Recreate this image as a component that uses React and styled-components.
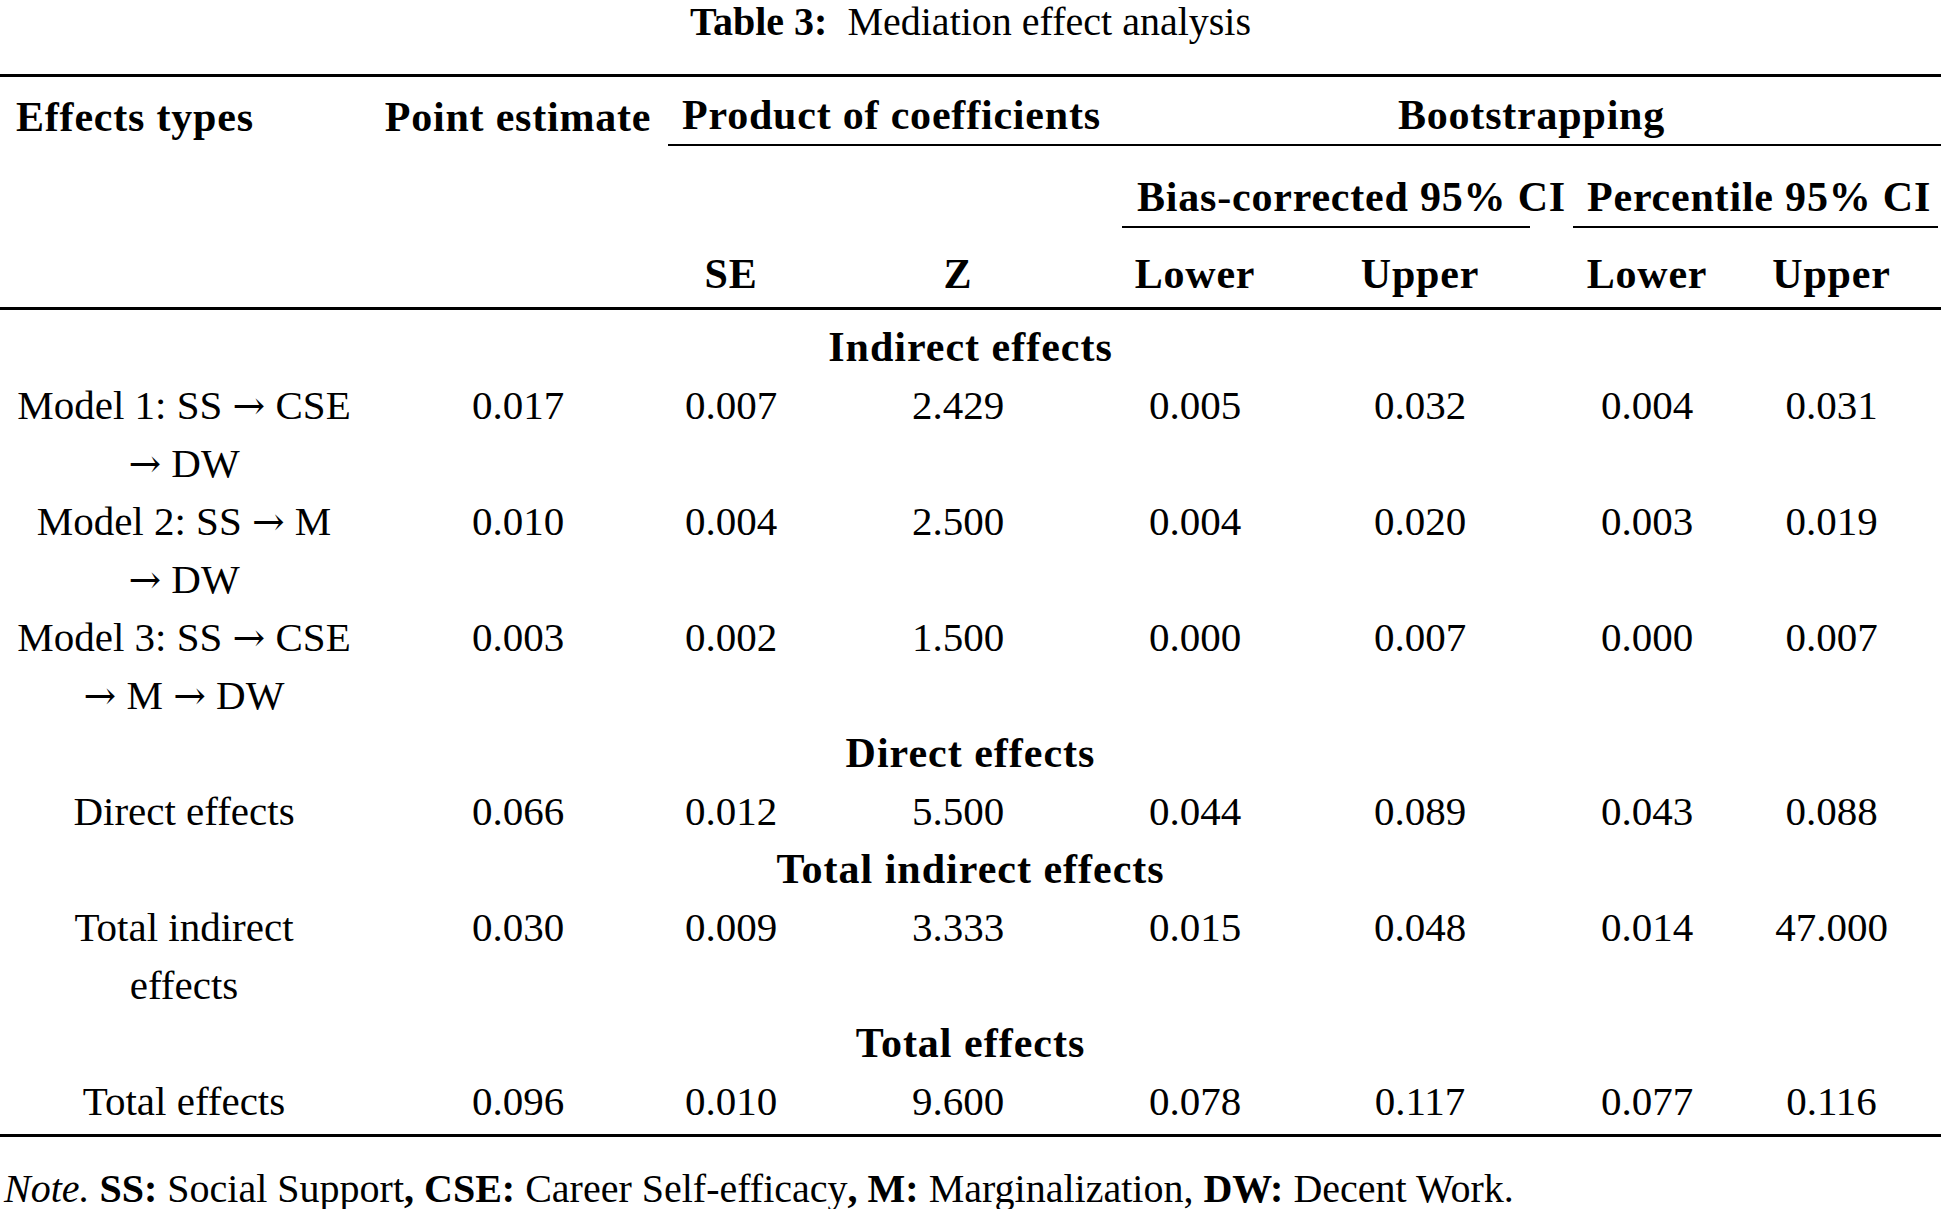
import React from 'react'
import styled, { createGlobalStyle } from 'styled-components'

const GlobalStyle = createGlobalStyle`
  html, body {
    margin: 0;
    padding: 0;
    background: #fff;
    overflow: hidden;
  }
  body {
    font-family: "Liberation Serif", "Times New Roman", serif;
    color: #000;
  }
`

// column widths, left to right
const widths = [368, 300, 126, 328, 146, 304, 150, 219]

const sections = [
  {
    title: 'Indirect effects',
    rows: [
      { label: ['Model 1: SS → CSE', '→ DW'], values: ['0.017', '0.007', '2.429', '0.005', '0.032', '0.004', '0.031'] },
      { label: ['Model 2: SS → M', '→ DW'], values: ['0.010', '0.004', '2.500', '0.004', '0.020', '0.003', '0.019'] },
      { label: ['Model 3: SS → CSE', '→ M → DW'], values: ['0.003', '0.002', '1.500', '0.000', '0.007', '0.000', '0.007'] },
    ],
  },
  {
    title: 'Direct effects',
    rows: [
      { label: ['Direct effects'], values: ['0.066', '0.012', '5.500', '0.044', '0.089', '0.043', '0.088'] },
    ],
  },
  {
    title: 'Total indirect effects',
    rows: [
      { label: ['Total indirect', 'effects'], values: ['0.030', '0.009', '3.333', '0.015', '0.048', '0.014', '47.000'] },
    ],
  },
  {
    title: 'Total effects',
    rows: [
      { label: ['Total effects'], values: ['0.096', '0.010', '9.600', '0.078', '0.117', '0.077', '0.116'] },
    ],
  },
]

// the arrows get their own font, the serif one draws them too small
function Label({ text }) {
  const parts = text.split('→')
  return (
    <div>
      {parts.map((p, i) => (
        <React.Fragment key={i}>
          {i > 0 && <Arrow>→</Arrow>}
          {p}
        </React.Fragment>
      ))}
    </div>
  )
}

function App() {
  return (
    <Page>
      <GlobalStyle />
      <Caption>
        <b>Table 3:</b>{'\u00a0 '}Mediation effect analysis
      </Caption>
      <Table>
        <colgroup>
          {widths.map((w, i) => (
            <Col key={i} $w={w} />
          ))}
        </colgroup>
        <thead>
          <tr>
            <Head $row={1} $align="left" $pl={16}>Effects types</Head>
            <Head $row={1}>Point estimate</Head>
            <Head $row={1} colSpan={2} $align="left" $pl={14} $rule>Product of coefficients</Head>
            <Head $row={1} colSpan={4} $rule>Bootstrapping</Head>
          </tr>
          <tr>
            <Head $row={2} colSpan={4} />
            <Head $row={2} colSpan={2} $align="left">
              <CmidLabel $ml={0} $mr={42}>Bias-corrected 95% CI</CmidLabel>
            </Head>
            <Head $row={2} colSpan={2} $align="left">
              <CmidLabel $ml={1} $mr={3}>Percentile 95% CI</CmidLabel>
            </Head>
          </tr>
          <tr>
            <Head $row={3} $last />
            <Head $row={3} $last />
            <Head $row={3} $last>SE</Head>
            <Head $row={3} $last>Z</Head>
            <Head $row={3} $last>Lower</Head>
            <Head $row={3} $last>Upper</Head>
            <Head $row={3} $last>Lower</Head>
            <Head $row={3} $last>Upper</Head>
          </tr>
        </thead>
        <tbody>
          {sections.map((s, si) => (
            <React.Fragment key={s.title}>
              <tr>
                <SectionCell colSpan={8} $first={si === 0}>{s.title}</SectionCell>
              </tr>
              {s.rows.map((r, ri) => {
                const last = si === sections.length - 1 && ri === s.rows.length - 1
                return (
                  <tr key={ri}>
                    <Cell $last={last}>
                      {r.label.map((l, li) => (
                        <Label key={li} text={l} />
                      ))}
                    </Cell>
                    {r.values.map((v, vi) => (
                      <Cell key={vi} $last={last}>{v}</Cell>
                    ))}
                  </tr>
                )
              })}
            </React.Fragment>
          ))}
        </tbody>
      </Table>
      <Note>
        <i>Note.</i> <b>SS:</b> Social Support<b>,</b> <b>CSE:</b> Career Self-efficacy<b>,</b>{' '}
        <b>M:</b> Marginalization, <b>DW:</b> Decent Work.
      </Note>
    </Page>
  )
}

export default App

const Page = styled.div`
  width: 1941px;
  padding-top: 2px;
  font-family: "Liberation Serif", "Times New Roman", serif;
  color: #000;
`

const Caption = styled.div`
  font-size: 40px;
  line-height: 40px;
  text-align: center;
`

const Table = styled.table`
  width: 100%;
  table-layout: fixed;
  border-collapse: separate;
  border-spacing: 0;
  margin-top: 32px;
  border-top: 3px solid #000;
  border-bottom: 3px solid #000;
`

const Col = styled.col`
  width: ${p => p.$w}px;
`

const headPad = {
  1: '9px 0 0',
  2: '22px 0 0',
  3: '17px 0 4px',
}

const Head = styled.th`
  font-size: 42px;
  font-weight: bold;
  letter-spacing: 0.8px;
  line-height: 58px;
  white-space: nowrap;
  vertical-align: bottom;
  text-align: ${p => p.$align || 'center'};
  padding: ${p => headPad[p.$row]};
  padding-left: ${p => (p.$pl ? `${p.$pl}px` : 0)};
  border-bottom: ${p => (p.$rule ? '2px solid #000' : p.$last ? '3px solid #000' : 'none')};
`

const CmidLabel = styled.div`
  margin-left: ${p => p.$ml}px;
  margin-right: ${p => p.$mr}px;
  padding-left: ${p => 15 - p.$ml}px;
  border-bottom: 2px solid #000;
`

const SectionCell = styled.td`
  font-size: 42px;
  font-weight: bold;
  letter-spacing: 1px;
  line-height: 58px;
  text-align: center;
  padding: ${p => (p.$first ? '8px 0 0' : 0)};
`

const Cell = styled.td`
  font-size: 41px;
  line-height: 58px;
  text-align: center;
  vertical-align: top;
  padding: 0 0 ${p => (p.$last ? '4px' : 0)};
  white-space: nowrap;
`

const Arrow = styled.span`
  font-family: "DejaVu Serif", "Liberation Serif", serif;
  font-size: 0.95em;
  line-height: 1;
`

const Note = styled.div`
  font-size: 40px;
  line-height: 40px;
  margin-top: 32px;
  padding-left: 4px;
`
